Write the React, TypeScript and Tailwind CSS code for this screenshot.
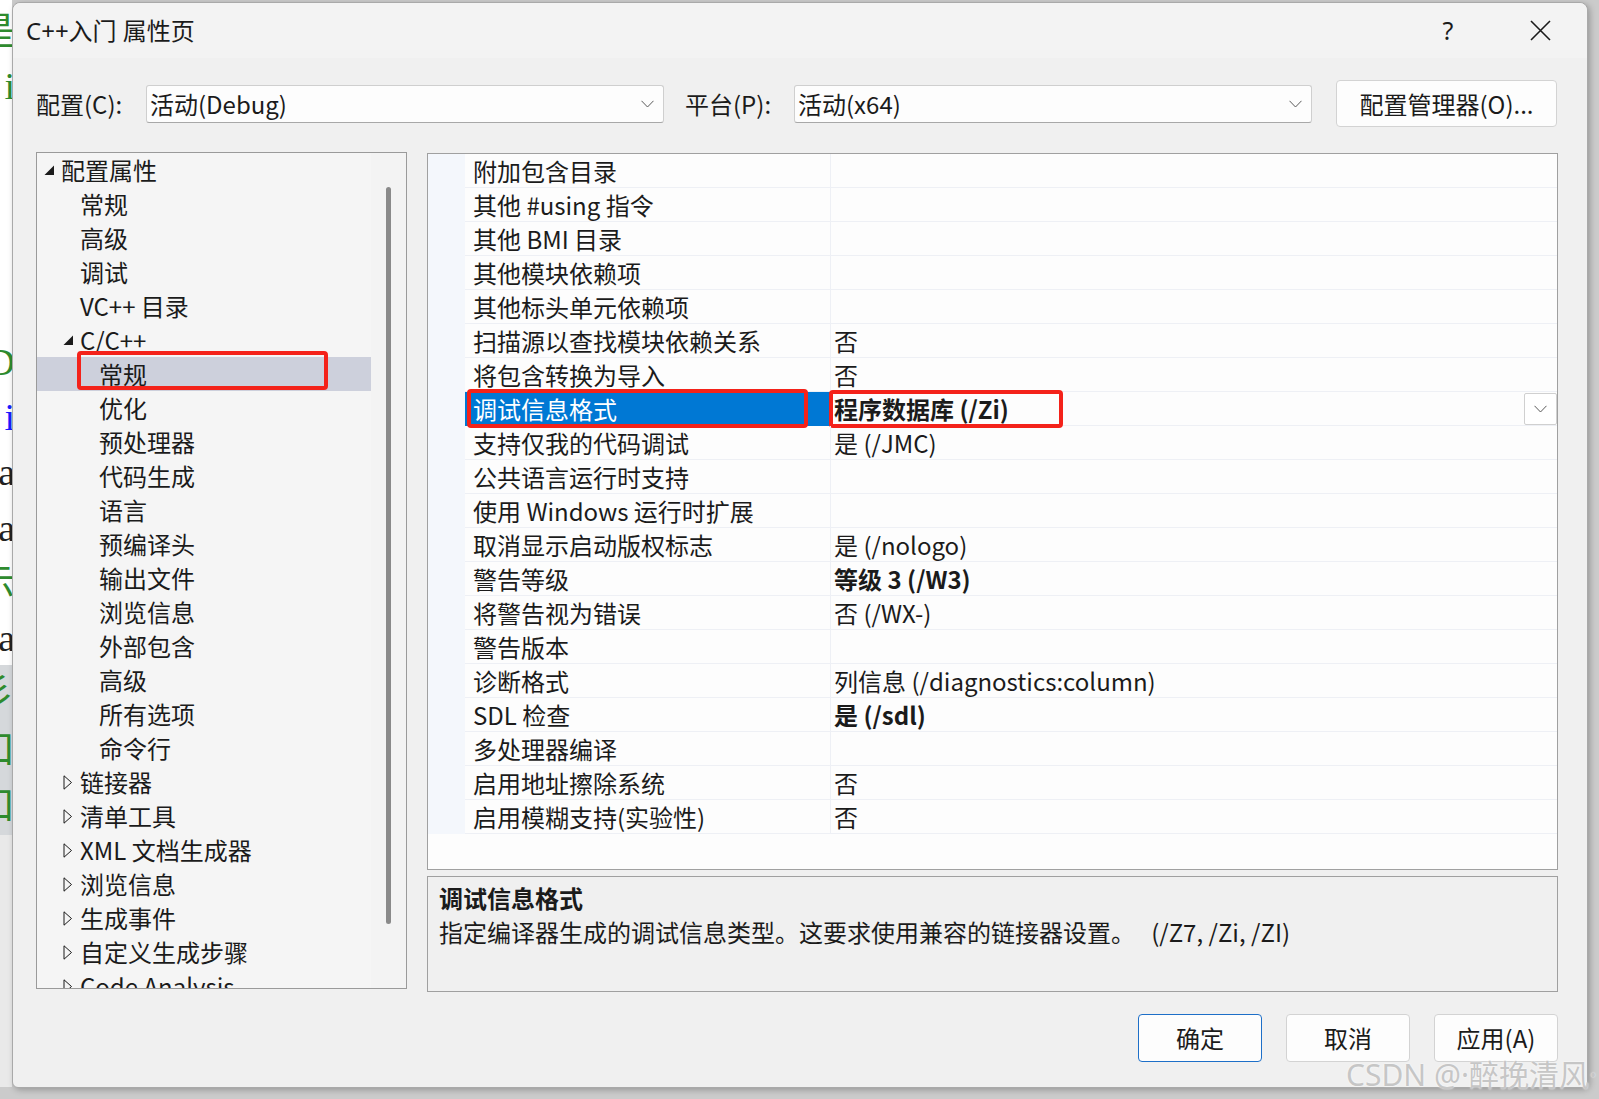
import React from 'react';

type TreeItem = { t: string; lv: 0 | 1 | 2; arrow?: 'open' | 'closed'; sel?: boolean };

const tree: TreeItem[] = [
  { t: '配置属性', lv: 0, arrow: 'open' },
  { t: '常规', lv: 1 },
  { t: '高级', lv: 1 },
  { t: '调试', lv: 1 },
  { t: 'VC++ 目录', lv: 1 },
  { t: 'C/C++', lv: 1, arrow: 'open' },
  { t: '常规', lv: 2, sel: true },
  { t: '优化', lv: 2 },
  { t: '预处理器', lv: 2 },
  { t: '代码生成', lv: 2 },
  { t: '语言', lv: 2 },
  { t: '预编译头', lv: 2 },
  { t: '输出文件', lv: 2 },
  { t: '浏览信息', lv: 2 },
  { t: '外部包含', lv: 2 },
  { t: '高级', lv: 2 },
  { t: '所有选项', lv: 2 },
  { t: '命令行', lv: 2 },
  { t: '链接器', lv: 1, arrow: 'closed' },
  { t: '清单工具', lv: 1, arrow: 'closed' },
  { t: 'XML 文档生成器', lv: 1, arrow: 'closed' },
  { t: '浏览信息', lv: 1, arrow: 'closed' },
  { t: '生成事件', lv: 1, arrow: 'closed' },
  { t: '自定义生成步骤', lv: 1, arrow: 'closed' },
  { t: 'Code Analysis', lv: 1, arrow: 'closed' },
];

// name, value, bold value
const props: [string, string, boolean?][] = [
  ['附加包含目录', ''],
  ['其他 #using 指令', ''],
  ['其他 BMI 目录', ''],
  ['其他模块依赖项', ''],
  ['其他标头单元依赖项', ''],
  ['扫描源以查找模块依赖关系', '否'],
  ['将包含转换为导入', '否'],
  ['调试信息格式', '程序数据库 (/Zi)', true],
  ['支持仅我的代码调试', '是 (/JMC)'],
  ['公共语言运行时支持', ''],
  ['使用 Windows 运行时扩展', ''],
  ['取消显示启动版权标志', '是 (/nologo)'],
  ['警告等级', '等级 3 (/W3)', true],
  ['将警告视为错误', '否 (/WX-)'],
  ['警告版本', ''],
  ['诊断格式', '列信息 (/diagnostics:column)'],
  ['SDL 检查', '是 (/sdl)', true],
  ['多处理器编译', ''],
  ['启用地址擦除系统', '否'],
  ['启用模糊支持(实验性)', '否'],
];

const indent = ['pl-[7px]', 'pl-[26px]', 'pl-[45px]'];

// bits of the editor window behind the dialog
const behind: [string, string][] = [
  ['是', 'text-[#2e8b2e]'],
  ['i', 'text-[#2e8b2e]'],
  ['', ''],
  ['', ''],
  ['', ''],
  ['', ''],
  ['D', 'text-[#2e8b2e]'],
  ['i', 'text-[#1a1aff]'],
  ['a', 'text-[#222]'],
  ['a', 'text-[#222]'],
  ['示', 'text-[#2e8b2e]'],
  ['a', 'text-[#222]'],
  ['彡', 'text-[#2e8b2e]'],
  ['口', 'text-[#2e8b2e]'],
  ['口', 'text-[#2e8b2e]'],
];

const Chevron = ({ className = '' }: { className?: string }) => (
  <svg width="13" height="8" viewBox="0 0 13 8" className={className}>
    <path d="M0.5 0.8 L6.5 7 L12.5 0.8" fill="none" stroke="#5a5a5a" strokeWidth="1" />
  </svg>
);

const Arrow = ({ kind }: { kind?: 'open' | 'closed' }) => {
  if (kind === 'open')
    return (
      <svg width="17" height="11" viewBox="0 0 17 11">
        <path d="M10 0.5 L10 10 L0.5 10 Z" fill="#1b1b1b" />
      </svg>
    );
  if (kind === 'closed')
    return (
      <svg width="17" height="15" viewBox="0 0 17 15">
        <path d="M1 0.8 L8.5 7.5 L1 14.2 Z" fill="none" stroke="#1b1b1b" strokeWidth="1" />
      </svg>
    );
  return <span className="w-[17px]" />;
};

const Select = ({ value }: { value: string }) => (
  <div className="w-[518px] h-[38px] flex items-center justify-between pl-[3px] pr-[9px] bg-[#fdfdfd] border border-[#cfcfcf] border-b-[#a8a8a8] rounded-[3px]">
    <span>{value}</span>
    <Chevron />
  </div>
);

const Btn = ({ label, primary }: { label: string; primary?: boolean }) => (
  <div
    className={
      primary
        ? 'w-[124px] h-[48px] flex items-center justify-center bg-[#fdfdfd] border-[1.5px] border-[#1d6fc8] rounded-[4px]'
        : 'w-[124px] h-[48px] flex items-center justify-center bg-[#fdfdfd] border border-[#d3d3d3] rounded-[4px]'
    }
  >
    {label}
  </div>
);

export default function App() {
  return (
    <div className="relative w-[1599px] h-[1099px] overflow-hidden bg-[#cbcbcb] flex items-start font-['Noto_Sans_CJK_SC','Noto_Sans',sans-serif] text-[24px] text-[#1b1b1b]">
      {/* strip of the window behind */}
      <div className="w-[12px] h-[1087px] flex flex-col bg-white">
        <div className="h-[665px] flex flex-col pt-[3px] font-['Liberation_Serif','Noto_Sans_CJK_SC',serif] text-[38px]">
          {behind.slice(0, 12).map(([c, cls], i) => (
            <div key={i} className={'h-[56px] leading-[56px] flex justify-end overflow-hidden whitespace-nowrap -mr-[3px] ' + cls}>
              {c}
            </div>
          ))}
        </div>
        <div className="h-[170px] bg-[#d5d8db] flex flex-col font-['Liberation_Serif','Noto_Sans_CJK_SC',serif] text-[38px]">
          {behind.slice(12).map(([c, cls], i) => (
            <div key={i} className={'h-[56px] leading-[56px] flex justify-end overflow-hidden whitespace-nowrap -mr-[3px] ' + cls}>
              {c}
            </div>
          ))}
        </div>
        <div className="flex-1 bg-[#e9e9e9]" />
      </div>

      {/* dialog */}
      <div className="mt-[2px] w-[1576px] h-[1086px] flex flex-col bg-[#f0f0f0] border border-[#a9a9a9] rounded-t-[8px] rounded-b-[6px] shadow-[2px_2px_6px_rgba(0,0,0,0.25)]">
        {/* title bar */}
        <div className="h-[55px] flex items-center bg-[#f3f3f3] rounded-t-[8px] pl-[13px]">
          <span className="text-[24px] font-['Noto_Sans','Noto_Sans_CJK_SC',sans-serif]">C++入门 属性页</span>
          <span className="ml-auto w-[30px] text-center text-[25px] font-['Noto_Sans',sans-serif]">?</span>
          <div className="ml-[67px] mr-[36px] flex items-center">
            <svg width="21" height="21" viewBox="0 0 21 21">
              <path d="M1 1 L20 20 M20 1 L1 20" stroke="#1b1b1b" strokeWidth="1.6" />
            </svg>
          </div>
        </div>

        {/* config row */}
        <div className="mt-[22px] h-[47px] pl-[23px] flex items-center">
          <span className="w-[110px]">配置(C):</span>
          <Select value="活动(Debug)" />
          <span className="ml-[21px] w-[109px]">平台(P):</span>
          <Select value="活动(x64)" />
          <div className="ml-[24px] w-[221px] h-[47px] flex items-center justify-center bg-[#fdfdfd] border border-[#d3d3d3] rounded-[4px]">
            配置管理器(O)...
          </div>
        </div>

        {/* main */}
        <div className="mt-[25px] pl-[23px] flex items-start">
          {/* tree */}
          <div className="w-[371px] h-[837px] border border-[#9a9a9a] bg-[#f5f5f5] flex">
            <div className="w-[334px] h-full overflow-hidden flex flex-col">
              {tree.map((it, i) => (
                <div
                  key={i}
                  className={
                    'relative h-[34px] shrink-0 flex items-center whitespace-nowrap ' +
                    indent[it.lv] +
                    (it.sel ? ' bg-[#cdd0dc]' : '')
                  }
                >
                  <Arrow kind={it.arrow} />
                  <span className="leading-[34px]">{it.t}</span>
                  {it.sel && (
                    <div className="absolute left-[40px] top-[-6px] w-[251px] h-[39px] border-[4px] border-[#f4221a] rounded-[4px]" />
                  )}
                </div>
              ))}
            </div>
            <div className="flex-1 bg-[#f3f3f3] flex justify-center">
              <div className="mt-[34px] w-[5px] h-[737px] rounded-full bg-[#8a8a8a]" />
            </div>
          </div>

          {/* right column */}
          <div className="ml-[20px] mt-[1px] w-[1131px] flex flex-col gap-[6px]">
            <div className="h-[717px] border border-[#a0a0a0] bg-[#fdfdfd] flex flex-col">
              {props.map(([name, value, bold], i) => {
                const sel = i === 7;
                return (
                  <div key={i} className="h-[34px] shrink-0 flex">
                    <div className="w-[37px] bg-[#f4f7fc]" />
                    <div
                      className={
                        sel
                          ? 'relative w-[365px] flex items-center pl-[8px] bg-[#0078d4] text-white border-b border-[#0078d4]'
                          : 'w-[365px] flex items-center pl-[8px] border-b border-[#eef0f5]'
                      }
                    >
                      {name}
                      {sel && (
                        <div className="absolute left-[2px] top-[-3px] w-[341px] h-[39px] border-[4px] border-[#f4221a] rounded-[4px]" />
                      )}
                    </div>
                    <div
                      className={
                        'relative flex-1 flex items-center pl-[3px] border-l border-b border-[#eef0f5]' +
                        (bold ? ' font-bold' : '')
                      }
                    >
                      {value}
                      {sel && (
                        <>
                          <div className="absolute left-[-2px] top-[-2px] w-[234px] h-[38px] border-[4px] border-[#f4221a] rounded-[4px]" />
                          <div className="ml-auto w-[33px] h-[32px] flex items-center justify-center bg-white border border-[#d0d0d0] rounded-[2px] font-normal">
                            <Chevron />
                          </div>
                        </>
                      )}
                    </div>
                  </div>
                );
              })}
            </div>

            <div className="h-[116px] border border-[#a0a0a0] bg-[#f0f0f0] pl-[11px] pt-[4px] flex flex-col">
              <div className="h-[34px] leading-[34px] font-bold">调试信息格式</div>
              <div className="h-[34px] leading-[34px] whitespace-pre">
                指定编译器生成的调试信息类型。这要求使用兼容的链接器设置。   (/Z7, /Zi, /ZI)
              </div>
            </div>
          </div>
        </div>

        {/* buttons */}
        <div className="mt-[22px] pr-[29px] flex justify-end gap-[24px]">
          <Btn label="确定" primary />
          <Btn label="取消" />
          <Btn label="应用(A)" />
        </div>
      </div>

      {/* watermark */}
      <div className="absolute left-[1346px] top-[1052px] text-[30px] text-[#c6c6c6] whitespace-nowrap font-['Noto_Sans','Noto_Sans_CJK_SC',sans-serif] [text-shadow:0_0_2px_#ffffff]">
        CSDN @·醉挽清风·
      </div>
    </div>
  );
}
